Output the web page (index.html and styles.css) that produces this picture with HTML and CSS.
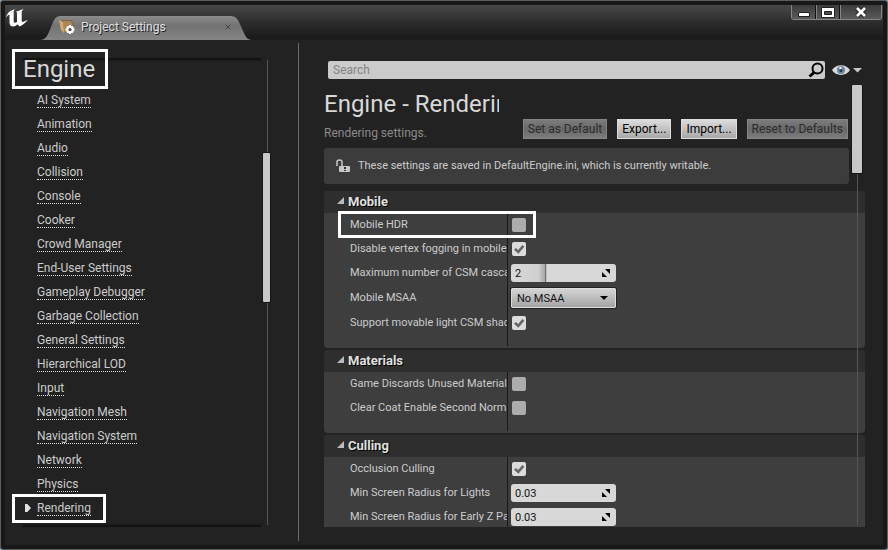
FILE: index.html
```html
<!DOCTYPE html>
<html lang="en">
<head>
<meta charset="utf-8">
<title>Project Settings</title>
<link rel="stylesheet" href="styles.css">
</head>
<body>
<div class="window">
  <header class="titlebar">
    <svg class="logo" viewBox="0 0 24 20" width="24" height="20" aria-hidden="true">
      <path fill="#fff" d="M1 9.500C2 5.500 4.500 2.500 10 1C8.900 2.200 8.700 3 8.700 4.500V13C8.700 14.800 10 15.500 12 14V5.200C12 4.300 11.500 3.900 10.700 3.800C13 3 15.500 2.200 18.800 .8C17 2.400 16.700 3.500 16.700 5V12.500C16.700 13.800 17.500 14.200 18.500 13.800C20 13.200 21.300 12.600 22.800 11.800C21.300 14.300 18.300 16.500 14.800 18.500L12.300 16.300C11.200 17.900 9.600 18.700 7.500 18.400C5.400 18.100 4.500 16.800 4.500 14.500V7.500C4.500 5.800 2.500 7.200 1 9.500Z"/>
    </svg>
    <div class="tab">
      <svg class="tab-shape" viewBox="0 0 210 24" width="210" height="24" aria-hidden="true">
        <defs><linearGradient id="tabfill" x1="0" y1="0" x2="0" y2="1"><stop offset="0" stop-color="#8c8c8c"/><stop offset=".4" stop-color="#737373"/><stop offset="1" stop-color="#858585"/></linearGradient></defs>
        <path fill="url(#tabfill)" d="M0 24C5 23 6 20 8 16L12 6C14 2 16 0 20 0H189C194 0 196 2 198 6L203 17C205 21 206 23 210 24Z"/>
      </svg>
      <svg class="tab-icon" viewBox="0 0 16 16" width="16" height="16" aria-hidden="true">
        <path fill="#7b6844" d="M3 1H13V3L14 4V12L4 14L3 12Z"/>
        <path fill="#ab8656" d="M4 2H12L13 5V11L4 14Z"/>
        <path fill="#d3a877" d="M0 1L4 3L5 14L2 11Z"/>
        <circle cx="11" cy="10.500" r="2.700" fill="none" stroke="#fff" stroke-width="2.200"/>
        <path stroke="#fff" stroke-width="2" d="M11 6V8M11 13V15M6.500 10.500H8.500M13.500 10.500H15.500M8 7.500L9.500 9M12.500 12L14 13.500M14 7.500L12.500 9M9.500 12L8 13.500"/>
        <circle cx="11" cy="10.500" r="1.500" fill="#555"/>
      </svg>
      <span class="tab-title">Project Settings</span>
      <button class="tab-close" aria-label="Close tab"><svg viewBox="0 0 6 6" width="6" height="6"><path d="M.5 .5L5.500 5.500M5.500 .5L.5 5.500" stroke="#444"/></svg></button>
    </div>
    <div class="window-controls">
      <button aria-label="Minimize"><svg viewBox="0 0 14 12" width="14" height="12"><path d="M1.500 6.500H12.500V10.500H1.500Z" fill="#fff" stroke="#222"/></svg></button>
      <button aria-label="Maximize"><svg viewBox="0 0 14 12" width="14" height="12"><path fill="#fff" fill-rule="evenodd" stroke="#222" d="M.5 1.500H13.500V11.500H.5ZM3.500 5.500V8.500H10.500V5.500Z"/></svg></button>
      <button class="wide" aria-label="Close"><svg viewBox="0 0 14 12" width="14" height="12"><path d="M3 2L11 10M11 2L3 10" stroke="#222" stroke-width="5"/><path d="M3 2L11 10M11 2L3 10" stroke="#fff" stroke-width="2.800"/></svg></button>
    </div>
  </header>

  <div class="content">
    <nav class="sidebar">
      <div class="category">
        <h2><span class="marked">Engine</span></h2>
        <ul>
          <li><a href="#">AI System</a></li>
          <li><a href="#">Animation</a></li>
          <li><a href="#">Audio</a></li>
          <li><a href="#">Collision</a></li>
          <li><a href="#">Console</a></li>
          <li><a href="#">Cooker</a></li>
          <li><a href="#">Crowd Manager</a></li>
          <li><a href="#">End-User Settings</a></li>
          <li><a href="#">Gameplay Debugger</a></li>
          <li><a href="#">Garbage Collection</a></li>
          <li><a href="#">General Settings</a></li>
          <li><a href="#">Hierarchical LOD</a></li>
          <li><a href="#">Input</a></li>
          <li><a href="#">Navigation Mesh</a></li>
          <li><a href="#">Navigation System</a></li>
          <li><a href="#">Network</a></li>
          <li><a href="#">Physics</a></li>
          <li class="current"><a href="#" aria-current="page">Rendering</a></li>
        </ul>
      </div>
      <div class="scrollbar"><div class="thumb"></div></div>
    </nav>

    <main class="main">
      <div class="search-row">
        <div class="search">
          <input type="text" placeholder="Search" aria-label="Search">
          <svg viewBox="0 0 16 16" width="16" height="16" aria-hidden="true"><circle cx="9.500" cy="6.500" r="5" fill="none" stroke="#000" stroke-width="2"/><path d="M6 10.500L1.500 14.500" stroke="#000" stroke-width="3"/></svg>
        </div>
        <button class="view-options" aria-label="View options">
          <svg viewBox="0 0 30 12" width="30" height="12"><path fill="#d9d9d9" d="M0 6C4 -.5 14 -.5 18 6C14 12.500 4 12.500 0 6Z"/><circle cx="9" cy="6" r="4" fill="#6f84a5"/><circle cx="9" cy="6.500" r="1.500" fill="#26364f"/><circle cx="8.500" cy="4" r="1.300" fill="#dde6f2"/><path fill="#c8c8c8" d="M21 4H30L25.500 8.500Z"/></svg>
        </button>
      </div>

      <div class="scroll-area">
        <div class="page-head">
          <h1>Engine - Rendering</h1>
          <div class="toolbar">
            <p>Rendering settings.</p>
            <button class="btn" disabled>Set as Default</button>
            <button class="btn">Export...</button>
            <button class="btn">Import...</button>
            <button class="btn" disabled>Reset to Defaults</button>
          </div>
          <div class="notice">
            <svg viewBox="0 0 14 14" width="14" height="14" aria-hidden="true"><path fill="none" stroke="#c8c8c8" stroke-width="1.500" d="M1 7V3Q1 1 3.500 1Q6 1 6 3V7"/><rect x="3" y="7" width="11" height="6" rx="1" fill="#c8c8c8"/><path fill="#333" d="M8 8H10V10H8ZM8 11H10V12H8Z"/></svg>
            <span>These settings are saved in DefaultEngine.ini, which is currently writable.</span>
          </div>
        </div>

        <section class="group">
          <h3>Mobile</h3>
          <div class="rows">
            <div class="row marked-row"><label for="hdr">Mobile HDR</label><input type="checkbox" id="hdr"></div>
            <div class="row"><label for="fog">Disable vertex fogging in mobile</label><input type="checkbox" id="fog" checked></div>
            <div class="row"><label for="csm">Maximum number of CSM cascades</label><div class="spin slider"><input type="text" id="csm" value="2"><svg viewBox="0 0 8 8" width="8" height="8" aria-hidden="true"><path d="M3 0H8V5ZM0 3V8H5Z"/></svg></div></div>
            <div class="row tall"><label for="msaa">Mobile MSAA</label><div class="combo"><select id="msaa"><option>No MSAA</option></select><svg viewBox="0 0 8 4" width="8" height="4" aria-hidden="true"><path d="M0 0H8L4 4Z"/></svg></div></div>
            <div class="row"><label for="movable">Support movable light CSM shader</label><input type="checkbox" id="movable" checked></div>
          </div>
        </section>

        <section class="group">
          <h3>Materials</h3>
          <div class="rows">
            <div class="row"><label for="discard">Game Discards Unused Material</label><input type="checkbox" id="discard"></div>
            <div class="row"><label for="coat">Clear Coat Enable Second Normal</label><input type="checkbox" id="coat"></div>
          </div>
        </section>

        <section class="group">
          <h3>Culling</h3>
          <div class="rows">
            <div class="row"><label for="occ">Occlusion Culling</label><input type="checkbox" id="occ" checked></div>
            <div class="row"><label for="lights">Min Screen Radius for Lights</label><div class="spin"><input type="text" id="lights" value="0.03"><svg viewBox="0 0 8 8" width="8" height="8" aria-hidden="true"><path d="M3 0H8V5ZM0 3V8H5Z"/></svg></div></div>
            <div class="row"><label for="earlyz">Min Screen Radius for Early Z Pass</label><div class="spin"><input type="text" id="earlyz" value="0.03"><svg viewBox="0 0 8 8" width="8" height="8" aria-hidden="true"><path d="M3 0H8V5ZM0 3V8H5Z"/></svg></div></div>
          </div>
        </section>
        <div class="scrollbar"><div class="thumb"></div></div>
      </div>
    </main>
  </div>
</div>
</body>
</html>
```
FILE: styles.css
```css
*, *::before, *::after { box-sizing: border-box; }

body {
  margin: 0;
  background: #7fb2d8;
  color: #ccc;
  font-family: Roboto, "Liberation Sans", sans-serif;
  font-size: 11px;
}

h1, h2, h3, p, ul { margin: 0; padding: 0; font-weight: 400; }
ul { list-style: none; }
button, input, select { margin: 0; padding: 0; border: 0; font: inherit; }
svg { display: block; }

.window {
  display: flex;
  flex-direction: column;
  height: 100vh;
  padding: 4px;
  border: 1px solid #5c5c5c;
  border-radius: 3px;
  background: #181818;
}

/* Title bar */
.titlebar {
  display: flex;
  align-items: flex-start;
  flex: none;
  height: 35px;
  background: linear-gradient(#484848, #2c2c2c 50%, #1c1c1c 90%);
}
.logo { margin-top: 3px; }
.tab {
  position: relative;
  display: flex;
  align-items: center;
  width: 210px;
  height: 24px;
  margin: 11px 0 0 12px;
  padding: 0 20px 2px 18px;
}
.tab-shape { position: absolute; inset: 0; }
.tab-icon, .tab-title, .tab-close { position: relative; }
.tab-title {
  flex: 1;
  margin-left: 6px;
  color: #e0e0e0;
  font-size: 12px;
  line-height: 20px;
  text-shadow: 1px 1px 0 #222;
}
.tab-close { background: none; }
.window-controls {
  display: flex;
  margin: 0 1px 0 auto;
  border: 1px solid #858585;
  border-top: 0;
  border-radius: 0 0 3px 3px;
  background: #111;
  gap: 1px;
}
.window-controls button {
  display: grid;
  place-items: center;
  width: 23px;
  height: 14px;
  background: linear-gradient(#3c3c3c, #5a5a5a);
}
.window-controls button + button { border-left: 1px solid #858585; }
.window-controls .wide { width: 41px; }

/* Body */
.content {
  display: flex;
  flex: 1;
  min-height: 0;
  background: #222;
}
.sidebar {
  position: relative;
  flex: none;
  width: 294px;
  padding: 18px 38px 18px 18px;
}
.sidebar::after {
  content: "";
  position: absolute;
  inset: 3px 0 4px auto;
  width: 1px;
  background: #6a6a6a;
}
.category { position: relative; height: 100%; }
.category::before, .category::after {
  content: "";
  position: absolute;
  left: 0;
  right: 0;
  height: 4px;
}
.category::before { top: 0; background: linear-gradient(#0e0e0e, #222); }
.category::after { bottom: 0; background: linear-gradient(#222, #0e0e0e); }
.category h2 {
  position: relative;
  margin-bottom: 10px;
  color: #d8d8d8;
  font-size: 24px;
  line-height: 22px;
}
.marked { position: relative; }
.marked::before, .current::after, .marked-row::after {
  content: "";
  position: absolute;
  z-index: 1;
  border: 3px solid #fff;
  pointer-events: none;
}
.marked::before { inset: -6px -13px -6px -11px; }
.category li {
  position: relative;
  height: 24px;
  padding: 3px 0 0 14px;
}
.category a {
  display: inline-block;
  border-bottom: 1px dotted #e0e0e0;
  color: #ccc;
  font-size: 12px;
  line-height: 14px;
  text-decoration: none;
  vertical-align: top;
}
.current::before {
  content: "";
  position: absolute;
  top: 6px;
  left: 2px;
  width: 6px;
  height: 8px;
  background: #e0e0e0;
  clip-path: polygon(0 0, 40% 0, 100% 50%, 40% 100%, 0 100%);
}
.current::after { top: -4px; left: -11px; width: 94px; height: 29px; }

/* Scrollbars lie over the panels they belong to */
.scrollbar { position: absolute; background: #555; width: 1px; }
.scrollbar .thumb {
  position: absolute;
  border-radius: 1px;
  background: #c8c8c8;
  box-shadow: 0 0 0 1px #151515;
}
.sidebar .scrollbar { top: 20px; bottom: 20px; right: 31px; }
.sidebar .thumb { top: 20%; left: -4px; width: 7px; height: 32%; }
.scroll-area .scrollbar { top: 0; bottom: 2px; right: 7px; }
.scroll-area .thumb { top: 0; left: -5px; width: 10px; height: 20%; }

/* Main column */
.main {
  display: flex;
  flex: 1;
  flex-direction: column;
  min-width: 0;
  padding: 21px 18px 18px 25px;
}
.search-row {
  display: flex;
  align-items: center;
  flex: none;
  gap: 7px;
  padding: 0 3px 0 4px;
  margin-bottom: 6px;
}
.search {
  display: flex;
  align-items: center;
  flex: 1;
  height: 18px;
  padding: 0 1px 0 5px;
  border-radius: 2px;
  background: #cbcbcb;
}
.search input {
  flex: 1;
  min-width: 0;
  background: none;
  font-size: 12px;
}
.search input::placeholder { color: #858585; opacity: 1; }
.view-options { background: none; }

.scroll-area {
  position: relative;
  flex: 1;
  min-height: 0;
  overflow: hidden;
}
.page-head { margin-bottom: 7px; padding-right: 16px; }
.page-head h1 {
  width: 175px;
  height: 34px;
  overflow: hidden;
  color: #d8d8d8;
  font-size: 24px;
  line-height: 38px;
  white-space: nowrap;
}
.toolbar { display: flex; gap: 10px; padding-right: 1px; }
.toolbar p {
  flex: 1;
  padding-top: 4px;
  color: #8a8a8a;
  font-size: 12px;
  line-height: 20px;
}
.btn {
  height: 20px;
  padding: 0 4px;
  border: 1px solid #ddd;
  background: linear-gradient(#dcdcdc, #a8a8a8);
  color: #000;
  font-size: 12px;
  line-height: 18px;
}
.btn:disabled {
  border-color: #858585;
  background: linear-gradient(#7c7c7c, #686868 50%, #7c7c7c);
  color: #2c2c2c;
}
.notice {
  display: flex;
  align-items: center;
  gap: 8px;
  height: 36px;
  margin-top: 5px;
  padding: 0 12px;
  border-radius: 3px;
  background: #3c3c3c;
}
.notice span { padding-bottom: 2px; }

/* Property groups */
.group {
  margin-bottom: 2px;
  border-radius: 4px;
  overflow: hidden;
  background: #3e3e3e;
}
.group h3 {
  position: relative;
  height: 22px;
  padding-left: 24px;
  background: #2e2e2e;
  color: #e0e0e0;
  font-size: 13px;
  font-weight: 700;
  line-height: 22px;
  text-shadow: 1px 1px 0 #000;
}
.group h3::before {
  content: "";
  position: absolute;
  top: 6px;
  left: 13px;
  width: 7px;
  height: 7px;
  background: #bbb;
  clip-path: polygon(100% 0, 100% 100%, 0 100%);
}
.rows { position: relative; padding-bottom: 13px; }
.rows::before {
  content: "";
  position: absolute;
  inset: 0 auto 2px 183px;
  width: 1px;
  background: #181818;
}
.row {
  position: relative;
  display: grid;
  grid-template-columns: 157px 105px;
  align-items: center;
  column-gap: 4px;
  height: 24px;
  padding-left: 26px;
}
.row.tall { height: 26px; }
.row label {
  overflow: hidden;
  line-height: 16px;
  white-space: nowrap;
}
.marked-row::after { top: -2px; left: 14px; width: 198px; height: 27px; }

input[type="checkbox"] {
  appearance: none;
  width: 14px;
  height: 14px;
  margin-left: 1px;
  border-radius: 2px;
  background: #acacac;
}
input[type="checkbox"]:checked { background: #dcdcdc; }
input[type="checkbox"]:checked::before {
  content: "";
  display: block;
  width: 14px;
  height: 14px;
  background: #666;
  clip-path: polygon(14% 56%, 28% 43%, 44% 57%, 74% 21%, 88% 34%, 46% 84%);
}
.spin, .combo {
  display: flex;
  align-items: center;
  color: #111;
}
.spin {
  height: 18px;
  padding-right: 6px;
  border-radius: 3px;
  background: #d8d8d8;
}
.spin input {
  flex: 1;
  min-width: 0;
  padding-left: 4px;
  background: none;
  color: #111;
}
.slider {
  background: linear-gradient(90deg, #d8d8d8, #cfcfcf 26%, #aaa 32%, #666 33%, #d8d8d8 34%);
}
.combo { position: relative; }
.combo select {
  appearance: none;
  width: 100%;
  height: 20px;
  padding-left: 5px;
  border: 1px solid #ddd;
  border-radius: 1px;
  outline: 1px solid #222;
  background: linear-gradient(#d4d4d4, #a4a4a4);
  color: #111;
}
.combo svg { position: absolute; right: 8px; pointer-events: none; }
```
